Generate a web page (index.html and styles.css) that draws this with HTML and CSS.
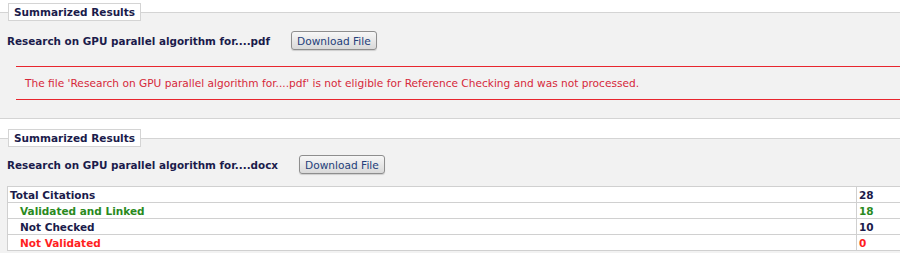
FILE: index.html
```html
<!DOCTYPE html>
<html>
<head>
<meta charset="utf-8">
<link rel="stylesheet" href="styles.css">
</head>
<body>
<fieldset class="panel panel-first">
  <legend class="panel-title">Summarized Results</legend>
  <div class="file-row">
    <span class="file-name">Research on GPU parallel algorithm for....pdf</span>
    <button class="btn">Download File</button>
  </div>
  <div class="message">The file 'Research on GPU parallel algorithm for....pdf' is not eligible for Reference Checking and was not processed.</div>
</fieldset>
<fieldset class="panel panel-second">
  <legend class="panel-title">Summarized Results</legend>
  <div class="file-row file-row-second">
    <span class="file-name">Research on GPU parallel algorithm for....docx</span>
    <button class="btn">Download File</button>
  </div>
  <table class="stats">
    <tr class="total"><td class="label">Total Citations</td><td class="num">28</td></tr>
    <tr class="ok"><td class="label sub">Validated and Linked</td><td class="num">18</td></tr>
    <tr class="plain"><td class="label sub">Not Checked</td><td class="num">10</td></tr>
    <tr class="bad"><td class="label sub">Not Validated</td><td class="num">0</td></tr>
  </table>
</fieldset>
</body>
</html>
```
FILE: styles.css
```css
html, body {
  margin: 0;
  padding: 0;
  background: #ffffff;
}
body {
  font-family: "DejaVu Sans", sans-serif;
  font-size: 10.6px;
  color: #1b1b4b;
  overflow: hidden;
}
.panel {
  margin: 0 -2px 0 -2px;
  padding: 0 0 0 11px;
  border: none;
  border-top: 1px solid #d4d4d4;
  border-bottom: 1px solid #d4d4d4;
  background: #f2f2f2;
  min-width: 0;
}
.panel-first {
  margin-top: 3px;
  height: 114px;
}
.panel-second {
  margin-top: 10px;
  height: 131px;
  border-bottom: none;
}
.panel-title {
  background: #ffffff;
  border: 1px solid #d4d4d4;
  padding: 1px 5px 1px 5px;
  margin-left: -1px;
  font-weight: bold;
  font-size: 10.5px;
  line-height: 14px;
  color: #1b1b4b;
}
.file-row {
  display: flex;
  align-items: center;
  margin-top: 10px;
  height: 19px;
}
.file-row-second {
  margin-top: 8px;
}
.file-name {
  font-weight: bold;
  font-size: 10.4px;
  color: #1b1b4b;
  margin-left: -2px;
}
.btn {
  margin-left: 21px;
  height: 19px;
  padding: 0 5px;
  font-family: "DejaVu Sans", sans-serif;
  font-size: 10.6px;
  color: #24407a;
  border: 1px solid #8e8e8e;
  border-radius: 3px;
  background: linear-gradient(#f7f7f7, #d9d9d9);
  box-shadow: 0 1px 1px rgba(0,0,0,0.15);
}
.message {
  margin: 16px 0 0 7px;
  height: 32px;
  display: flex;
  align-items: center;
  padding-left: 9px;
  border-top: 1px solid #e8262e;
  border-bottom: 1px solid #e8262e;
  color: #d6283a;
}
.stats {
  margin-top: 12px;
  margin-left: -2px;
  width: 902px;
  border-collapse: collapse;
  background: #ffffff;
}
.stats td {
  border: 1px solid #d0d0d0;
  height: 15px;
  padding: 0 2px;
  font-weight: bold;
  font-size: 10.5px;
  line-height: 14px;
}
.stats .sub {
  padding-left: 12px;
}
.stats .num {
  width: 47px;
}
.total td, .plain td { color: #1b1b4b; }
.ok td { color: #2a8a1e; }
.bad td { color: #ff1f1f; }
```
